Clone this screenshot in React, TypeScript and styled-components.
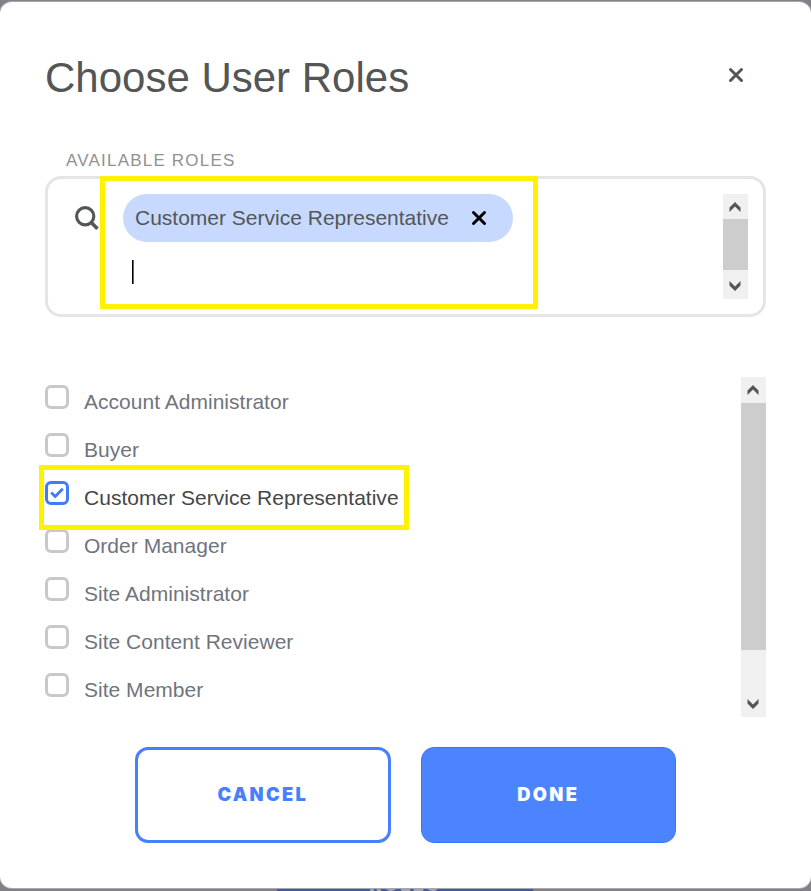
import React from "react";
import styled, { createGlobalStyle, css } from "styled-components";

const GlobalStyle = createGlobalStyle`
  * { box-sizing: border-box; }
  body { margin: 0; background: #828086; font-family: "Liberation Sans", Arial, sans-serif; }
`;

const Backdrop = styled.div`
  position: relative;
  height: 891px;
  padding-top: 2px;
  overflow: hidden;
  background: #828086;
`;

const heavyLabel = css`
  font: 900 18.3px Inter, sans-serif;
  letter-spacing: 2.3px;
`;

const PageButton = styled.div`
  position: absolute;
  left: 277px;
  top: 799px;
  width: 256px;
  height: 92px;
  display: flex;
  justify-content: center;
  align-items: flex-end;
  background: #42599b;
  color: #9fa4b4;
  ${heavyLabel}
  line-height: 14px;
`;

const Modal = styled.main`
  position: relative;
  height: 886px;
  padding: 50px 45px 0;
  background: #fff;
  border-radius: 12px;
  box-shadow: 0 0 0 1px #a8a7aa;
`;

const Header = styled.header`
  display: flex;
  justify-content: space-between;
  height: 50px;
`;

const Title = styled.h1`
  margin: 0;
  padding-top: 1px;
  font-size: 42px;
  font-weight: 400;
  line-height: 50px;
  color: #545655;
`;

const IconButton = styled.button<{ $tone: string }>`
  display: flex;
  align-items: center;
  justify-content: center;
  width: 16px;
  height: 16px;
  padding: 0;
  border: 0;
  background: none;
  color: ${(p) => p.$tone};
`;

const CloseSlot = styled.div`
  padding: 15px 22px 0 0;
`;

const FieldLabel = styled.label`
  display: block;
  margin: 48px 0 0 21px;
  height: 24px;
  font-size: 17px;
  line-height: 21px;
  letter-spacing: 1.2px;
  color: #919191;
`;

const Field = styled.section`
  position: relative;
  display: flex;
  width: 721px;
  height: 141px;
  margin-top: 2px;
  padding: 15px 15px 0 27px;
  border: 3px solid #e5e5e5;
  border-radius: 16px;
`;

const SearchSlot = styled.div`
  width: 48px;
  padding-top: 12px;
  color: #545655;
`;

const Entries = styled.div`
  flex: 1;
`;

const Chip = styled.div`
  display: flex;
  align-items: center;
  width: 389.5px;
  height: 48px;
  padding: 0 25.5px 0 12px;
  justify-content: space-between;
  border-radius: 24px;
  background: #c8d9ff;
  font-size: 21px;
  color: #545655;
`;

const Caret = styled.div`
  width: 2px;
  height: 24px;
  margin: 18px 0 0 9px;
  background: linear-gradient(90deg, #000 50%, #666 50%);
`;

const Highlight = styled.div<{ $area: "field" | "row" }>`
  position: absolute;
  border: 5px solid #fff200;
  pointer-events: none;
  ${(p) =>
    p.$area === "field"
      ? css`left: 52px; top: -3px; width: 438px; height: 133px;`
      : css`left: -6px; top: -16px; width: 370px; height: 65px; z-index: 1;`}
`;

const Scrollbar = styled.div<{ $height: number }>`
  display: flex;
  flex-direction: column;
  justify-content: space-between;
  width: 25px;
  height: ${(p) => p.$height}px;
  background: #f0f0f0;
`;

const ArrowBox = styled.div<{ $height: number }>`
  display: flex;
  align-items: center;
  justify-content: center;
  height: ${(p) => p.$height}px;
  padding-right: 1px;
  color: #555;
`;

const Thumb = styled.div<{ $height: number; $after: number }>`
  height: ${(p) => p.$height}px;
  margin-bottom: ${(p) => p.$after}px;
  background: #cdcdcd;
`;

const RoleArea = styled.section`
  display: flex;
  justify-content: space-between;
  width: 721px;
  height: 340px;
  margin-top: 60px;
`;

const RoleList = styled.ul`
  margin: 0;
  padding: 8px 0 0;
  list-style: none;
`;

const RoleRow = styled.li<{ $checked: boolean }>`
  position: relative;
  display: flex;
  gap: 15px;
  height: 48px;
  font-size: 21px;
  line-height: 33px;
  white-space: nowrap;
  letter-spacing: 0.02px;
  color: ${(p) => (p.$checked ? "#454746" : "#6f747e")};
`;

const Checkbox = styled.span<{ $checked: boolean }>`
  display: flex;
  align-items: center;
  justify-content: center;
  width: 24px;
  height: 24px;
  border: 3px solid ${(p) => (p.$checked ? "#407bff" : "#c9c9c9")};
  border-radius: 6px;
  color: #407bff;
`;

const Actions = styled.footer`
  display: flex;
  gap: 30px;
  margin: 30px 0 0 90px;
`;

const ActionButton = styled.button<{ $primary?: boolean }>`
  width: 255.5px;
  height: 96px;
  padding: 0 0 3px;
  border-radius: 13px;
  ${heavyLabel}
  ${(p) =>
    p.$primary
      ? css`background: #4c84ff; color: #fff; border: 1px solid #3676fb;`
      : css`background: #fff; color: #4680ff; border: 3px solid #4680ff;`}
`;

const Cross = () => (
  <svg width="16" height="16" viewBox="0 0 16 16" fill="none" stroke="currentColor" strokeWidth="3" strokeLinecap="round">
    <path d="M2.5 2.5L13.5 13.5M13.5 2.5L2.5 13.5" />
  </svg>
);

const Magnifier = () => (
  <svg width="25" height="25" viewBox="0 0 25 25" fill="none" stroke="currentColor" strokeWidth="3.2">
    <circle cx="10.2" cy="10.2" r="8.6" />
    <path d="M16.2 16.5L22.5 22.8" strokeWidth="3.6" />
  </svg>
);

const Arrow = ({ down = false, height = 26 }: { down?: boolean; height?: number }) => (
  <ArrowBox $height={height}>
    <svg width="12" height="10" viewBox="0 0 12 10" fill="currentColor">
      <path d={down ? "M.5 0L6 5.4L11.5 0V4.4L6 10L.5 4.4Z" : "M.5 10L6 4.6L11.5 10V5.6L6 0L.5 5.6Z"} />
    </svg>
  </ArrowBox>
);

const roles = [
  "Account Administrator",
  "Buyer",
  "Customer Service Representative",
  "Order Manager",
  "Site Administrator",
  "Site Content Reviewer",
  "Site Member",
];
const selected = "Customer Service Representative";

export default function App() {
  return (
    <Backdrop>
      <GlobalStyle />
      <PageButton>ROLES</PageButton>
      <Modal>
        <Header>
          <Title>Choose User Roles</Title>
          <CloseSlot>
            <IconButton $tone="#545655" aria-label="Close"><Cross /></IconButton>
          </CloseSlot>
        </Header>
        <FieldLabel>AVAILABLE ROLES</FieldLabel>
        <Field>
          <SearchSlot><Magnifier /></SearchSlot>
          <Entries>
            <Chip>
              {selected}
              <IconButton $tone="#000" aria-label="Remove"><Cross /></IconButton>
            </Chip>
            <Caret />
          </Entries>
          <Scrollbar $height={105}>
            <Arrow height={25} />
            <Thumb $height={51} $after={3} />
            <Arrow down />
          </Scrollbar>
          <Highlight $area="field" />
        </Field>
        <RoleArea>
          <RoleList>
            {roles.map((role) => (
              <RoleRow key={role} $checked={role === selected}>
                <Checkbox $checked={role === selected}>
                  {role === selected && (
                    <svg width="14" height="12" viewBox="0 0 14 12" fill="none" stroke="currentColor" strokeWidth="2.8">
                      <path d="M1.2 5.6L5.2 9.5L12.8 1.8" />
                    </svg>
                  )}
                </Checkbox>
                {role}
                {role === selected && <Highlight $area="row" />}
              </RoleRow>
            ))}
          </RoleList>
          <Scrollbar $height={340}>
            <Arrow />
            <Thumb $height={247} $after={41} />
            <Arrow down />
          </Scrollbar>
        </RoleArea>
        <Actions>
          <ActionButton>CANCEL</ActionButton>
          <ActionButton $primary>DONE</ActionButton>
        </Actions>
      </Modal>
    </Backdrop>
  );
}
